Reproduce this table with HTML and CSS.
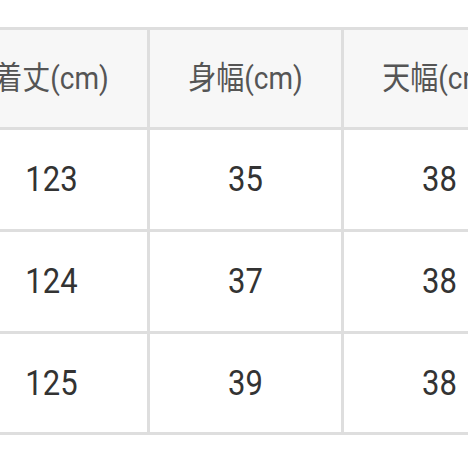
FILE: index.html
```html
<!DOCTYPE html>
<html lang="ja">
<head>
<meta charset="utf-8">
<link rel="stylesheet" href="styles.css">
</head>
<body>
<div class="size-table">
  <div class="cell head"><span class="txt">着丈(cm)</span></div>
  <div class="cell head"><span class="txt">身幅(cm)</span></div>
  <div class="cell head"><span class="txt">天幅(cm)</span></div>
  <div class="cell"><span class="txt">123</span></div>
  <div class="cell"><span class="txt">35</span></div>
  <div class="cell"><span class="txt">38</span></div>
  <div class="cell"><span class="txt">124</span></div>
  <div class="cell"><span class="txt">37</span></div>
  <div class="cell"><span class="txt">38</span></div>
  <div class="cell"><span class="txt">125</span></div>
  <div class="cell"><span class="txt">39</span></div>
  <div class="cell"><span class="txt">38</span></div>
</div>
</body>
</html>
```
FILE: styles.css
```css
html, body {
  margin: 0;
  padding: 0;
  background: #ffffff;
  overflow: hidden;
  width: 468px;
  height: 468px;
}
body {
  font-family: Roboto, "Noto Sans CJK JP", sans-serif;
}
.size-table {
  display: grid;
  grid-template-columns: 191px 191px 191px;
  grid-template-rows: 97px 99px 99px 98px;
  gap: 3px;
  padding: 3px;
  background: #dedede;
  width: max-content;
  margin-top: 27px;
  margin-left: -47px;
}
.cell {
  background: #ffffff;
  display: flex;
  align-items: center;
  justify-content: center;
  color: #333333;
  font-size: 31px;
  white-space: nowrap;
}
.cell.head {
  background: #f7f7f7;
  color: #555555;
  font-size: 28px;
}
.txt {
  display: inline-block;
  line-height: 1;
  transform: scaleY(1.12);
}
```
